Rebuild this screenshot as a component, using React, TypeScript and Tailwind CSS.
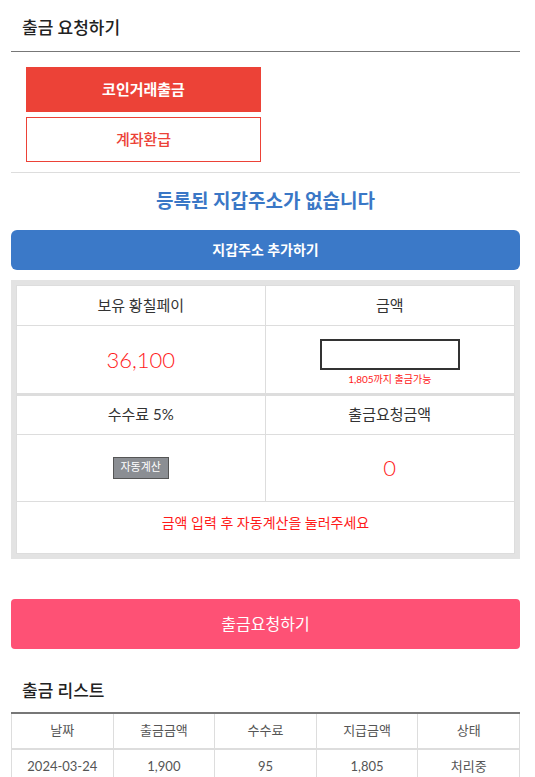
import React from "react";

const rows = [
  { date: "2024-03-24", amount: "1,900", fee: "95", paid: "1,805", status: "처리중" },
];

export default function App() {
  return (
    <div
      className="w-[535px] bg-white pl-[11px] pr-[15px] text-[#333]"
      style={{ fontFamily: 'Lato, "Noto Sans CJK KR", sans-serif' }}
    >
      <div className="flex h-[52px] items-center border-b border-[#777] pl-[11px] pt-[4px]">
        <h2 className="text-[17px] font-medium text-[#222]">출금 요청하기</h2>
      </div>

      <div className="flex flex-col gap-[5px] pl-[15px] pt-[15px]">
        <button
          type="button"
          className="h-[45px] w-[235px] bg-[#ec4237] text-[15px] font-bold text-white"
        >
          코인거래출금
        </button>
        <button
          type="button"
          className="h-[45px] w-[235px] border border-[#ec4237] bg-white text-[15px] font-medium text-[#ec4237]"
        >
          계좌환급
        </button>
      </div>

      <div className="mt-[10px] border-t border-[#ddd]" />

      <p className="mt-[14px] text-center text-[19px] font-bold text-[#3a77c6]">
        등록된 지갑주소가 없습니다
      </p>

      <button
        type="button"
        className="mt-[14px] flex h-[40px] w-full items-center justify-center rounded-[6px] bg-[#3b79c8] text-[14px] font-bold text-white"
      >
        지갑주소 추가하기
      </button>

      <div className="mt-[10px] bg-[#e3e3e3] p-[5px]">
        <div className="border border-[#ddd] bg-white">
          <div className="grid grid-cols-2">
            <div className="flex h-[40px] items-center justify-center border-r border-b border-[#ddd] text-[15px] text-[#333]">
              보유 황칠페이
            </div>
            <div className="flex h-[40px] items-center justify-center border-b border-[#ddd] text-[15px] text-[#333]">
              금액
            </div>
            <div className="flex h-[67px] items-center justify-center border-r border-[#ddd] text-[22px] font-light text-[#ff1a1a]">
              36,100
            </div>
            <div className="flex h-[67px] flex-col items-center justify-center pt-[8px]">
              <div className="h-[31px] w-[140px] border-2 border-[#333]" />
              <span className="mt-[2px] text-[10px] text-[#ff1a1a]">1,805까지 출금가능</span>
            </div>
          </div>
        </div>
        <div className="border border-t-2 border-[#ddd] bg-white">
          <div className="grid grid-cols-2">
            <div className="flex h-[39px] items-center justify-center border-r border-b border-[#ddd] text-[15px] text-[#333]">
              수수료 5%
            </div>
            <div className="flex h-[39px] items-center justify-center border-b border-[#ddd] text-[15px] text-[#333]">
              출금요청금액
            </div>
            <div className="flex h-[67px] items-center justify-center border-r border-b border-[#ddd]">
              <button
                type="button"
                className="h-[22px] w-[56px] border border-[#555] bg-[#8b8e93] text-[11px] text-white"
              >
                자동계산
              </button>
            </div>
            <div className="flex h-[67px] items-center justify-center border-b border-[#ddd] text-[22px] font-light text-[#ff1a1a]">
              0
            </div>
          </div>
          <div className="h-[51px] pt-[10px] text-center text-[14px] text-[#ff1a1a]">
            금액 입력 후 자동계산을 눌러주세요
          </div>
        </div>
      </div>

      <button
        type="button"
        className="mt-[40px] flex h-[50px] w-full items-center justify-center rounded-[4px] bg-[#fe5175] text-[16px] text-white"
      >
        출금요청하기
      </button>

      <h2 className="mt-[29px] pl-[11px] text-[17px] font-medium text-[#222]">출금 리스트</h2>

      <table className="mt-[9px] w-full border-collapse border-t-2 border-[#777] text-[13px] text-[#555]">
        <thead>
          <tr className="h-[36px]">
            {["날짜", "출금금액", "수수료", "지급금액", "상태"].map((h) => (
              <th key={h} className="w-1/5 border border-t-0 border-[#ddd] border-b-2 font-normal">
                {h}
              </th>
            ))}
          </tr>
        </thead>
        <tbody>
          {rows.map((r) => (
            <tr key={r.date} className="h-[34px]">
              <td className="border border-[#ddd] text-center">{r.date}</td>
              <td className="border border-[#ddd] text-center">{r.amount}</td>
              <td className="border border-[#ddd] text-center">{r.fee}</td>
              <td className="border border-[#ddd] text-center">{r.paid}</td>
              <td className="border border-[#ddd] text-center">{r.status}</td>
            </tr>
          ))}
        </tbody>
      </table>
    </div>
  );
}
